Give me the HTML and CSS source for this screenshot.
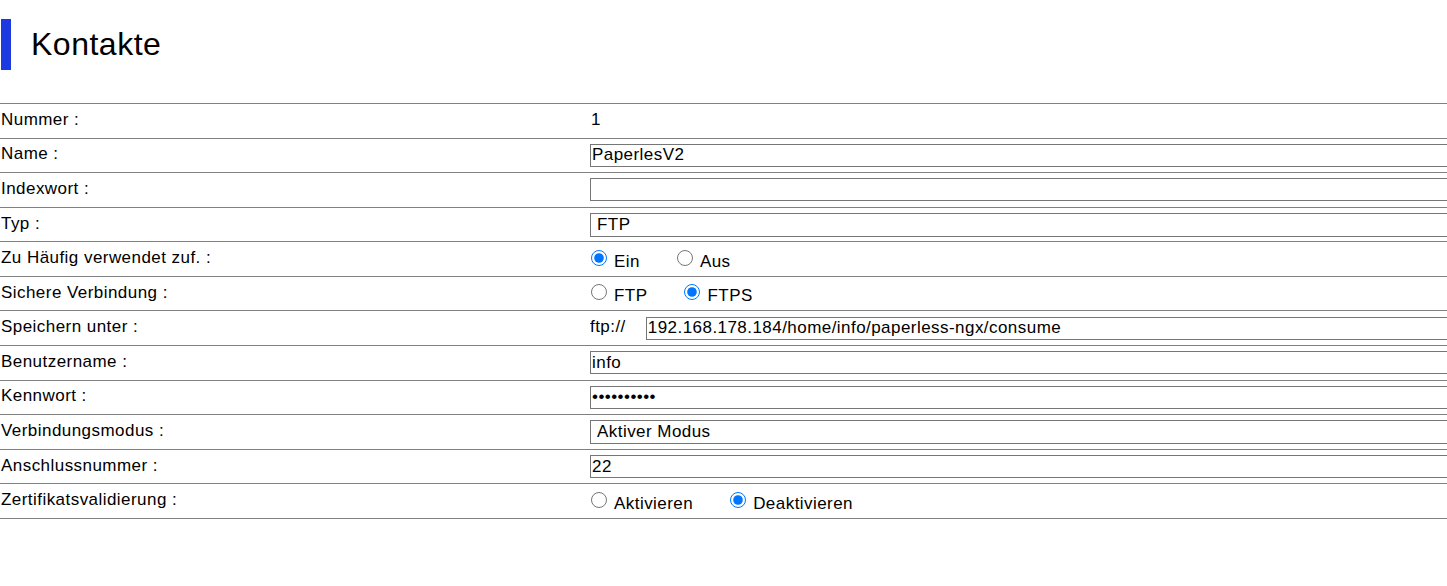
FILE: index.html
```html
<!DOCTYPE html>
<html lang="de">
<head>
<meta charset="utf-8">
<title>Kontakte</title>
<link rel="stylesheet" href="styles.css">
</head>
<body>
<header class="page-head">
  <span class="head-bar"></span>
  <h1 class="head-title">Kontakte</h1>
</header>
<div class="form">
  <div class="row">
    <div class="label">Nummer :</div>
    <div class="value"><span class="plain">1</span></div>
  </div>
  <div class="row">
    <div class="label">Name :</div>
    <div class="value"><input class="field" type="text" value="PaperlesV2"></div>
  </div>
  <div class="row">
    <div class="label">Indexwort :</div>
    <div class="value"><input class="field" type="text" value=""></div>
  </div>
  <div class="row">
    <div class="label">Typ :</div>
    <div class="value"><select class="choice"><option>FTP</option></select></div>
  </div>
  <div class="row">
    <div class="label">Zu Häufig verwendet zuf. :</div>
    <div class="value">
      <label class="opt"><input class="radio" type="radio" name="hv" checked><span class="opt-text">Ein</span></label>
      <label class="opt"><input class="radio" type="radio" name="hv"><span class="opt-text">Aus</span></label>
    </div>
  </div>
  <div class="row">
    <div class="label">Sichere Verbindung :</div>
    <div class="value">
      <label class="opt"><input class="radio" type="radio" name="sv"><span class="opt-text">FTP</span></label>
      <label class="opt"><input class="radio" type="radio" name="sv" checked><span class="opt-text">FTPS</span></label>
    </div>
  </div>
  <div class="row">
    <div class="label">Speichern unter :</div>
    <div class="value"><span class="prefix">ftp://</span><input class="field" type="text" value="192.168.178.184/home/info/paperless-ngx/consume"></div>
  </div>
  <div class="row">
    <div class="label">Benutzername :</div>
    <div class="value"><input class="field" type="text" value="info"></div>
  </div>
  <div class="row">
    <div class="label">Kennwort :</div>
    <div class="value"><input class="field" type="password" value="0123456789"></div>
  </div>
  <div class="row">
    <div class="label">Verbindungsmodus :</div>
    <div class="value"><select class="choice"><option>Aktiver Modus</option></select></div>
  </div>
  <div class="row">
    <div class="label">Anschlussnummer :</div>
    <div class="value"><input class="field" type="text" value="22"></div>
  </div>
  <div class="row">
    <div class="label">Zertifikatsvalidierung :</div>
    <div class="value">
      <label class="opt"><input class="radio" type="radio" name="zv"><span class="opt-text">Aktivieren</span></label>
      <label class="opt"><input class="radio" type="radio" name="zv" checked><span class="opt-text">Deaktivieren</span></label>
    </div>
  </div>
</div>
</body>
</html>
```

FILE: styles.css
```css
html, body {
  margin: 0;
  padding: 0;
  background: #ffffff;
}
body {
  font-family: "Liberation Sans", Arial, sans-serif;
  font-size: 17px;
  letter-spacing: 0.45px;
  color: #000000;
  overflow: hidden;
}
.page-head {
  display: flex;
  align-items: stretch;
  gap: 20px;
  margin: 19px 0 0 1px;
  height: 51px;
}
.head-bar {
  width: 10px;
  background: #1d3ae0;
}
.head-title {
  margin: 0;
  font-size: 32px;
  letter-spacing: 0.5px;
  font-weight: normal;
  line-height: 51px;
}
.form {
  margin-top: 33px;
  border-top: 1px solid #808080;
}
.row {
  display: flex;
  box-sizing: border-box;
  height: 34.58px;
  border-bottom: 1px solid #808080;
  overflow: hidden;
}
.label {
  flex: 0 0 589px;
  padding-left: 1px;
  display: flex;
  align-items: center;
  padding-bottom: 2px;
  white-space: nowrap;
}
.value {
  flex: 1 1 auto;
  display: flex;
  align-items: center;
  min-width: 0;
  white-space: nowrap;
}
.plain {
  padding-left: 1px;
  padding-bottom: 2px;
}
.field {
  flex: 0 0 auto;
  box-sizing: border-box;
  width: 1100px;
  height: 23px;
  margin: 0;
  padding: 0 1px;
  border: 1px solid #767676;
  border-radius: 0;
  font-family: "Liberation Sans", Arial, sans-serif;
  font-size: 17px;
  letter-spacing: 0.45px;
  color: #000000;
  background: #ffffff;
  outline: none;
}
.choice {
  flex: 0 0 auto;
  box-sizing: border-box;
  width: 1100px;
  height: 24px;
  margin: 0;
  padding: 0 6px;
  border: 1px solid #767676;
  border-radius: 0;
  appearance: none;
  -webkit-appearance: none;
  font-family: "Liberation Sans", Arial, sans-serif;
  font-size: 17px;
  letter-spacing: 0.45px;
  color: #000000;
  background: #ffffff;
}
.prefix {
  margin-right: 20px;
  padding-bottom: 2px;
}
.opt {
  display: flex;
  align-items: center;
  margin-right: 36px;
}
.radio {
  width: 16px;
  height: 16px;
  margin: 0 7px 3px 1px;
}
.opt-text {
  margin-top: 5px;
}
```
